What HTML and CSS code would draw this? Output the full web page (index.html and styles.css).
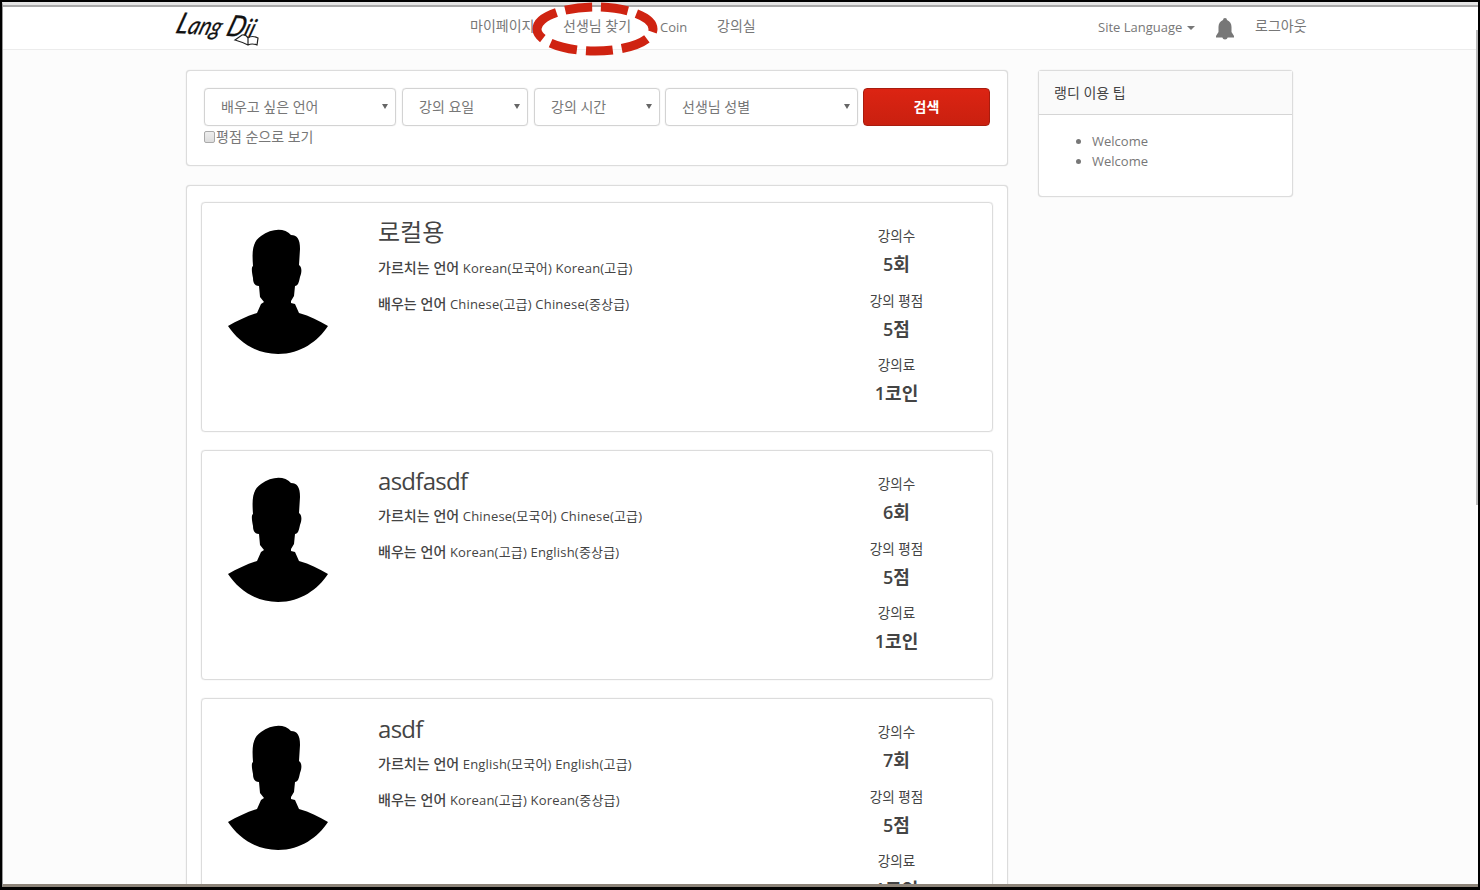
FILE: index.html
```html
<!DOCTYPE html>
<html lang="ko">
<head>
<meta charset="utf-8">
<title>LangDij</title>
<link rel="stylesheet" href="styles.css">
</head>
<body>
<svg class="defs" width="0" height="0">
  <symbol id="person" viewBox="0 0 102 126">
    <path d="M26 37C25 23 25 13 34 7C45 -1 58 -1 64 6C70 6 73 10 73 20L72 36C75 38 75 43 73 48C72 53 71 57 68 57L67 67L64 72V74L68 75L72 84C83 87 92 92 101 97C91 112 74 125 51 125C28 125 11 112 1 97C10 92 20 87 30 84L34 75L37 73L33 68L32 57C27 57 26 53 26 49C25 44 24 38 26 37Z"/>
  </symbol>
</svg>
<div class="window">
  <header class="navbar">
    <svg class="logo" width="90" height="40" viewBox="0 0 90 40" role="img" aria-label="LangDij">
      <g transform="rotate(3 40 20) skewX(-16)"><text class="logo-text" x="11" y="28" textLength="78" lengthAdjust="spacingAndGlyphs"><tspan>L</tspan><tspan class="low">ang</tspan><tspan> D</tspan><tspan class="low">ij</tspan></text></g>
      <path class="book" d="M63 33L70 28Q74 27 76 31Q80 28 86 31L85 38Q80 36 76 38Q70 35 63 33ZM76 31V38"/>
    </svg>
    <nav class="menu">
      <a class="item-my">마이페이지</a>
      <a class="item-find">선생님 찾기
        <svg class="marker" width="130" height="60" viewBox="0 0 130 60"><path d="M7 30A58 22 0 0 1 123 30A58 22 0 0 1 7 30"/></svg>
      </a>
      <a class="item-coin">Coin</a>
      <a class="item-room">강의실</a>
    </nav>
    <div class="tools">
      <a class="lang">Site Language<i class="caret"></i></a>
      <svg class="bell" width="20" height="22" viewBox="0 0 20 22"><path d="M10 0Q12 0 12 2Q16.500 4 16.500 9V14L19 18V19.500H1V18L3.500 14V9Q3.500 4 8 2Q8 0 10 0ZM7 19H13Q12 21.500 10 21.500Q8 21.500 7 19Z"/></svg>
      <a class="logout">로그아웃</a>
    </div>
  </header>
  <main class="content">
    <div class="main-col">
      <section class="panel search">
        <div class="filters">
          <div class="select wide">배우고 싶은 언어<span class="arrow"></span></div>
          <div class="select">강의 요일<span class="arrow"></span></div>
          <div class="select third">강의 시간<span class="arrow"></span></div>
          <div class="select gender">선생님 성별<span class="arrow"></span></div>
          <button class="submit">검색</button>
        </div>
        <label class="check"><span class="box"></span>평점 순으로 보기</label>
      </section>
      <section class="panel list">
        <article class="card">
          <svg class="avatar" width="102" height="126"><use href="#person"/></svg>
          <div class="info"><h2 class="hangul">로컬용</h2><p><b>가르치는 언어</b> Korean(모국어) Korean(고급)</p><p><b>배우는 언어</b> Chinese(고급) Chinese(중상급)</p></div>
          <dl class="stats"><dt>강의수</dt><dd>5회</dd><dt>강의 평점</dt><dd>5점</dd><dt>강의료</dt><dd>1코인</dd></dl>
        </article>
        <article class="card">
          <svg class="avatar" width="102" height="126"><use href="#person"/></svg>
          <div class="info"><h2>asdfasdf</h2><p><b>가르치는 언어</b> Chinese(모국어) Chinese(고급)</p><p><b>배우는 언어</b> Korean(고급) English(중상급)</p></div>
          <dl class="stats"><dt>강의수</dt><dd>6회</dd><dt>강의 평점</dt><dd>5점</dd><dt>강의료</dt><dd>1코인</dd></dl>
        </article>
        <article class="card">
          <svg class="avatar" width="102" height="126"><use href="#person"/></svg>
          <div class="info"><h2>asdf</h2><p><b>가르치는 언어</b> English(모국어) English(고급)</p><p><b>배우는 언어</b> Korean(고급) Korean(중상급)</p></div>
          <dl class="stats"><dt>강의수</dt><dd>7회</dd><dt>강의 평점</dt><dd>5점</dd><dt>강의료</dt><dd>1코인</dd></dl>
        </article>
      </section>
    </div>
    <aside class="panel tips">
      <h3>랭디 이용 팁</h3>
      <ul><li>Welcome</li><li>Welcome</li></ul>
    </aside>
  </main>
  <div class="scroll"></div>
</div>
</body>
</html>
```
FILE: styles.css
```css
* { box-sizing: border-box; }
body {
  margin: 0;
  width: 1480px;
  height: 890px;
  overflow: hidden;
  background: #000;
  padding: 2px 2px 3px 2px;
  font-family: "Open Sans", "Noto Sans CJK KR", sans-serif;
  font-size: 13px;
  color: #777;
  white-space: nowrap;
}
.defs { position: absolute; }
.window {
  position: relative;
  height: 885px;
  background: #fcfcfc;
  border-left: 1px solid #999;
  border-top: 3px solid #e4e4e4;
  border-bottom: 3px solid #8d8479;
}
.navbar {
  display: flex;
  height: 45px;
  background: #fff;
  border-top: 2px solid #a9a9a9;
  border-bottom: 1px solid #ececec;
  line-height: 40px;
}
.logo { margin-left: 169px; width: 90px; flex: none; overflow: visible; }
.logo-text { font: italic 400 29px Lato, sans-serif; fill: #111; stroke: #111; stroke-width: .3; }
.low { font-size: 25px; }
.book { fill: #fff; stroke: #222; stroke-width: 1.2; }
.menu { display: flex; margin-left: 208px; width: 628px; font-size: 14px; flex: none; }
.menu a { height: 39px; margin-top: -1px; }
.item-my { width: 93px; }
.item-find { position: relative; width: 97px; }
.menu .item-coin { width: 57px; margin-top: 0; font-size: 13px; }
.marker { position: absolute; left: -33px; top: -7px; z-index: 2; }
.marker path {
  fill: none;
  stroke: #cf2311;
  stroke-width: 9;
  stroke-dasharray: 27 9;
}
.tools { display: flex; width: 220px; }
.lang { width: 118px; }
.caret {
  display: inline-block;
  margin-left: 5px;
  vertical-align: 2px;
  border: 4px solid transparent;
  border-top-color: #777;
  border-bottom: 0;
}
.bell { margin: 11px 20px 0 -1px; fill: #777; flex: none; }
.logout { margin-top: -1px; font-size: 14px; }
.content {
  display: flex;
  align-items: flex-start;
  gap: 30px;
  height: 834px;
  overflow: hidden;
  padding: 20px 0 0 183px;
}
.main-col { width: 822px; flex: none; }
.panel {
  background: #fff;
  border: 1px solid #dcdcdc;
  border-radius: 4px;
  box-shadow: 0 0 1px #ccc;
}
.search { height: 96px; padding: 17px 0 0 17px; margin-bottom: 19px; }
.filters { display: flex; height: 38px; }
.select {
  display: flex;
  justify-content: space-between;
  width: 126px;
  margin-right: 6px;
  padding: 0 7px 0 16px;
  border: 1px solid #d3d3d3;
  border-radius: 4px;
  box-shadow: 0 0 1px #ccc;
  line-height: 36px;
  font-size: 14px;
}
.wide { width: 192px; }
.third { margin-right: 5px; }
.gender { width: 193px; margin-right: 5px; }
.arrow {
  margin-top: 15px;
  height: 0;
  border: 3px solid transparent;
  border-top: 5px solid #666;
  border-bottom: 0;
}
.submit {
  width: 127px;
  padding: 0 0 2px;
  border: 1px solid #a81c0e;
  border-radius: 4px;
  background: linear-gradient(#dc2413, #c9200f);
  color: #fff;
  font: 700 14px "Noto Sans CJK KR", sans-serif;
}
.check { display: flex; font-size: 14px; line-height: 22px; }
.box {
  width: 11px;
  height: 12px;
  margin: 5px 1px 0 0;
  border: 1px solid #aaa;
  border-radius: 2px;
  background: linear-gradient(#eee, #ddd);
}
.list { height: 900px; padding: 16px 14px; }
.card {
  display: flex;
  height: 230px;
  margin-bottom: 18px;
  border: 1px solid #dcdcdc;
  border-radius: 4px;
  box-shadow: 0 0 1px #ccc;
  color: #444;
}
.avatar { margin: 26px 0 0 25px; flex: none; }
.info { width: 423px; margin-left: 49px; padding-top: 12px; flex: none; }
h2 { height: 36px; margin: 0 0 7px; font-size: 24px; line-height: 36px; letter-spacing: -.7px; font-weight: 400; }
.hangul { letter-spacing: 0; line-height: 34px; }
p { height: 20px; margin: 0 0 16px; font-size: 13px; line-height: 20px; letter-spacing: .19px; }
b { font-family: "Noto Sans CJK KR", sans-serif; font-weight: 500; font-size: 14px; line-height: 1; letter-spacing: 0; }
.stats { width: 193px; margin: 23px 0 0; text-align: center; }
dt { font-size: 13.6px; line-height: 20px; height: 25px; }
dd { margin: 0 0 10px; font-size: 18px; font-weight: 600; line-height: 27px; height: 29.5px; }
.tips { width: 255px; height: 127px; }
.tips h3 {
  margin: 0;
  height: 44px;
  padding-left: 15px;
  background: #fafafa;
  border-bottom: 1px solid #d5d5d5;
  font-size: 14px;
  font-weight: 400;
  line-height: 43px;
  color: #444;
}
.tips ul { margin: 16px 0 0; padding-left: 53px; line-height: 20px; }
.scroll { position: absolute; right: 0; top: 25px; width: 2px; height: 475px; background: #bbb; }
```
